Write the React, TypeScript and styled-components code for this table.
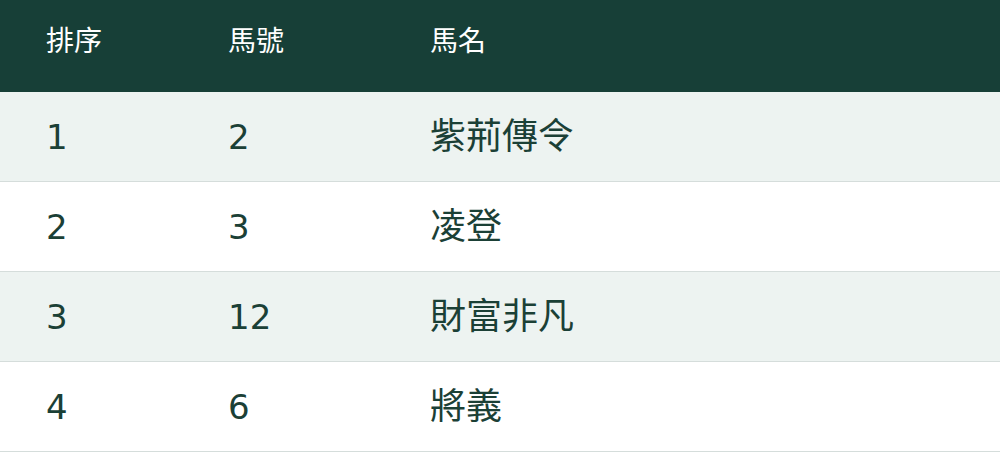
import React from 'react';
import styled, { createGlobalStyle } from 'styled-components';

const GlobalStyle = createGlobalStyle`
  html, body {
    margin: 0;
    padding: 0;
    background: #ffffff;
  }
  body {
    font-family: "DejaVu Sans", "Noto Sans CJK TC", sans-serif;
  }
`;

const Table = styled.div`
  width: 1000px;
  display: flex;
  flex-direction: column;
`;

const HeaderRow = styled.div`
  display: grid;
  grid-template-columns: 182px 202px 1fr;
  height: 92px;
  align-items: center;
  background: #173f37;
  color: #ffffff;
  font-size: 28px;
  padding-bottom: 8px;
  box-sizing: border-box;
`;

const Row = styled.div<{ $shaded: boolean }>`
  display: grid;
  grid-template-columns: 182px 202px 1fr;
  height: 90px;
  align-items: center;
  box-sizing: border-box;
  background: ${p => (p.$shaded ? '#edf3f1' : '#ffffff')};
  border-bottom: 1px solid #d5dddb;
  color: #1b4036;
  font-size: 34px;
`;

const Cell = styled.div<{ $big?: boolean }>`
  padding-left: 46px;
  line-height: 1;
  ${p => (p.$big ? 'font-size: 36px;' : '')}
`;

const rows = [
  { rank: '1', num: '2', name: '紫荊傳令' },
  { rank: '2', num: '3', name: '凌登' },
  { rank: '3', num: '12', name: '財富非凡' },
  { rank: '4', num: '6', name: '將義' },
];

export default function App() {
  return (
    <>
      <GlobalStyle />
      <Table>
        <HeaderRow>
          <Cell>排序</Cell>
          <Cell>馬號</Cell>
          <Cell>馬名</Cell>
        </HeaderRow>
        {rows.map((r, i) => (
          <Row key={r.rank} $shaded={i % 2 === 0}>
            <Cell>{r.rank}</Cell>
            <Cell>{r.num}</Cell>
            <Cell $big>{r.name}</Cell>
          </Row>
        ))}
      </Table>
    </>
  );
}
